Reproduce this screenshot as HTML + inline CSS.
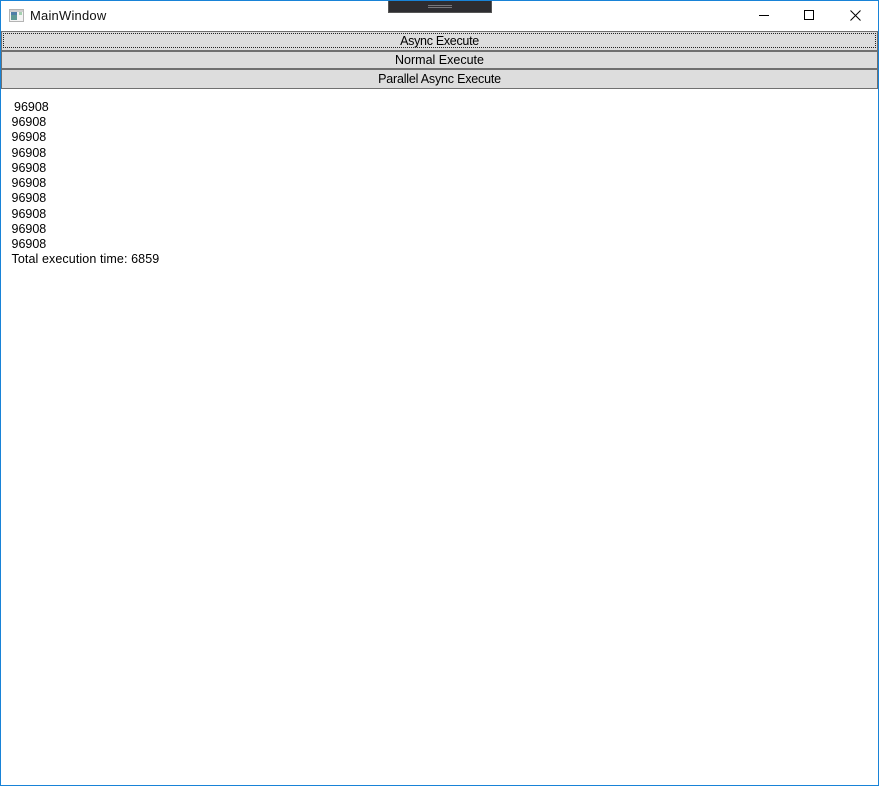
<!DOCTYPE html>
<html>
<head>
<meta charset="utf-8">
<title>MainWindow</title>
<style>
html,body{margin:0;padding:0;background:#fff;}
body{width:879px;height:786px;position:relative;overflow:hidden;font-family:"Liberation Sans",sans-serif;font-size:12.5px;color:#000;}
.a{position:absolute;}
.frame{left:0;top:0;width:877px;height:784px;border:1px solid #1883d7;}
.bg{position:absolute;left:1px;top:31px;width:877px;height:58px;box-sizing:border-box;background:#dddddd;border:1px solid #707070;}
.band{position:absolute;left:1px;width:877px;height:2px;background:#707070;}
.l{position:absolute;left:1px;width:877px;text-align:center;line-height:17px;white-space:nowrap;}
.t{position:absolute;left:11.5px;line-height:15px;white-space:nowrap;}
.focus{position:absolute;left:3px;top:33px;width:873px;height:15px;box-sizing:border-box;border:1px dotted #222;}
</style>
</head>
<body>
<div class="a frame"></div>

<svg class="a" style="left:9px;top:9px" width="16" height="14" viewBox="0 0 16 14">
<rect x="0.5" y="0.5" width="14" height="12" fill="#f4f4f4" stroke="#b4b4b4"/>
<rect x="1" y="1" width="13" height="2" fill="#cfcfcf"/>
<rect x="2" y="3" width="6" height="8" fill="#5f9a96"/>
<rect x="2" y="3" width="6" height="3" fill="#4f7fa8"/>
<rect x="10" y="3" width="3" height="3" fill="#a5d0b0"/>
</svg>
<div class="a" style="left:30px;top:8px;line-height:16px;font-size:13px;color:#111;letter-spacing:0.2px;">MainWindow</div>

<div class="a" style="left:388px;top:1px;width:104px;height:12px;box-sizing:border-box;background:#2d2d30;border:1px solid #555;border-top:0;"></div>
<div class="a" style="left:428px;top:5px;width:24px;height:1px;background:#77777a;"></div>
<div class="a" style="left:428px;top:7px;width:24px;height:1px;background:#77777a;"></div>

<svg class="a" style="left:750px;top:5px" width="120" height="20" viewBox="0 0 120 20">
<path d="M9 10.5H19" stroke="#000" stroke-width="1" fill="none"/>
<rect x="54.5" y="5.5" width="9" height="9" stroke="#000" stroke-width="1" fill="none"/>
<path d="M100.5 5.5L110.5 15.5M110.5 5.5L100.5 15.5" stroke="#000" stroke-width="1" fill="none"/>
</svg>

<div class="bg"></div>
<div class="band" style="top:50px;"></div>
<div class="band" style="top:68px;"></div>
<div class="l" style="top:33px;letter-spacing:-0.3px;">Async Execute</div>
<div class="l" style="top:52px;">Normal Execute</div>
<div class="l" style="top:71px;letter-spacing:-0.2px;">Parallel Async Execute</div>
<div class="focus"></div>

<div class="t" style="left:14px;top:100px;">96908</div>
<div class="t" style="top:115px;">96908</div>
<div class="t" style="top:130px;">96908</div>
<div class="t" style="top:146px;">96908</div>
<div class="t" style="top:161px;">96908</div>
<div class="t" style="top:176px;">96908</div>
<div class="t" style="top:191px;">96908</div>
<div class="t" style="top:207px;">96908</div>
<div class="t" style="top:222px;">96908</div>
<div class="t" style="top:237px;">96908</div>
<div class="t" style="top:252px;letter-spacing:0.1px;">Total execution time: 6859</div>
</body>
</html>
